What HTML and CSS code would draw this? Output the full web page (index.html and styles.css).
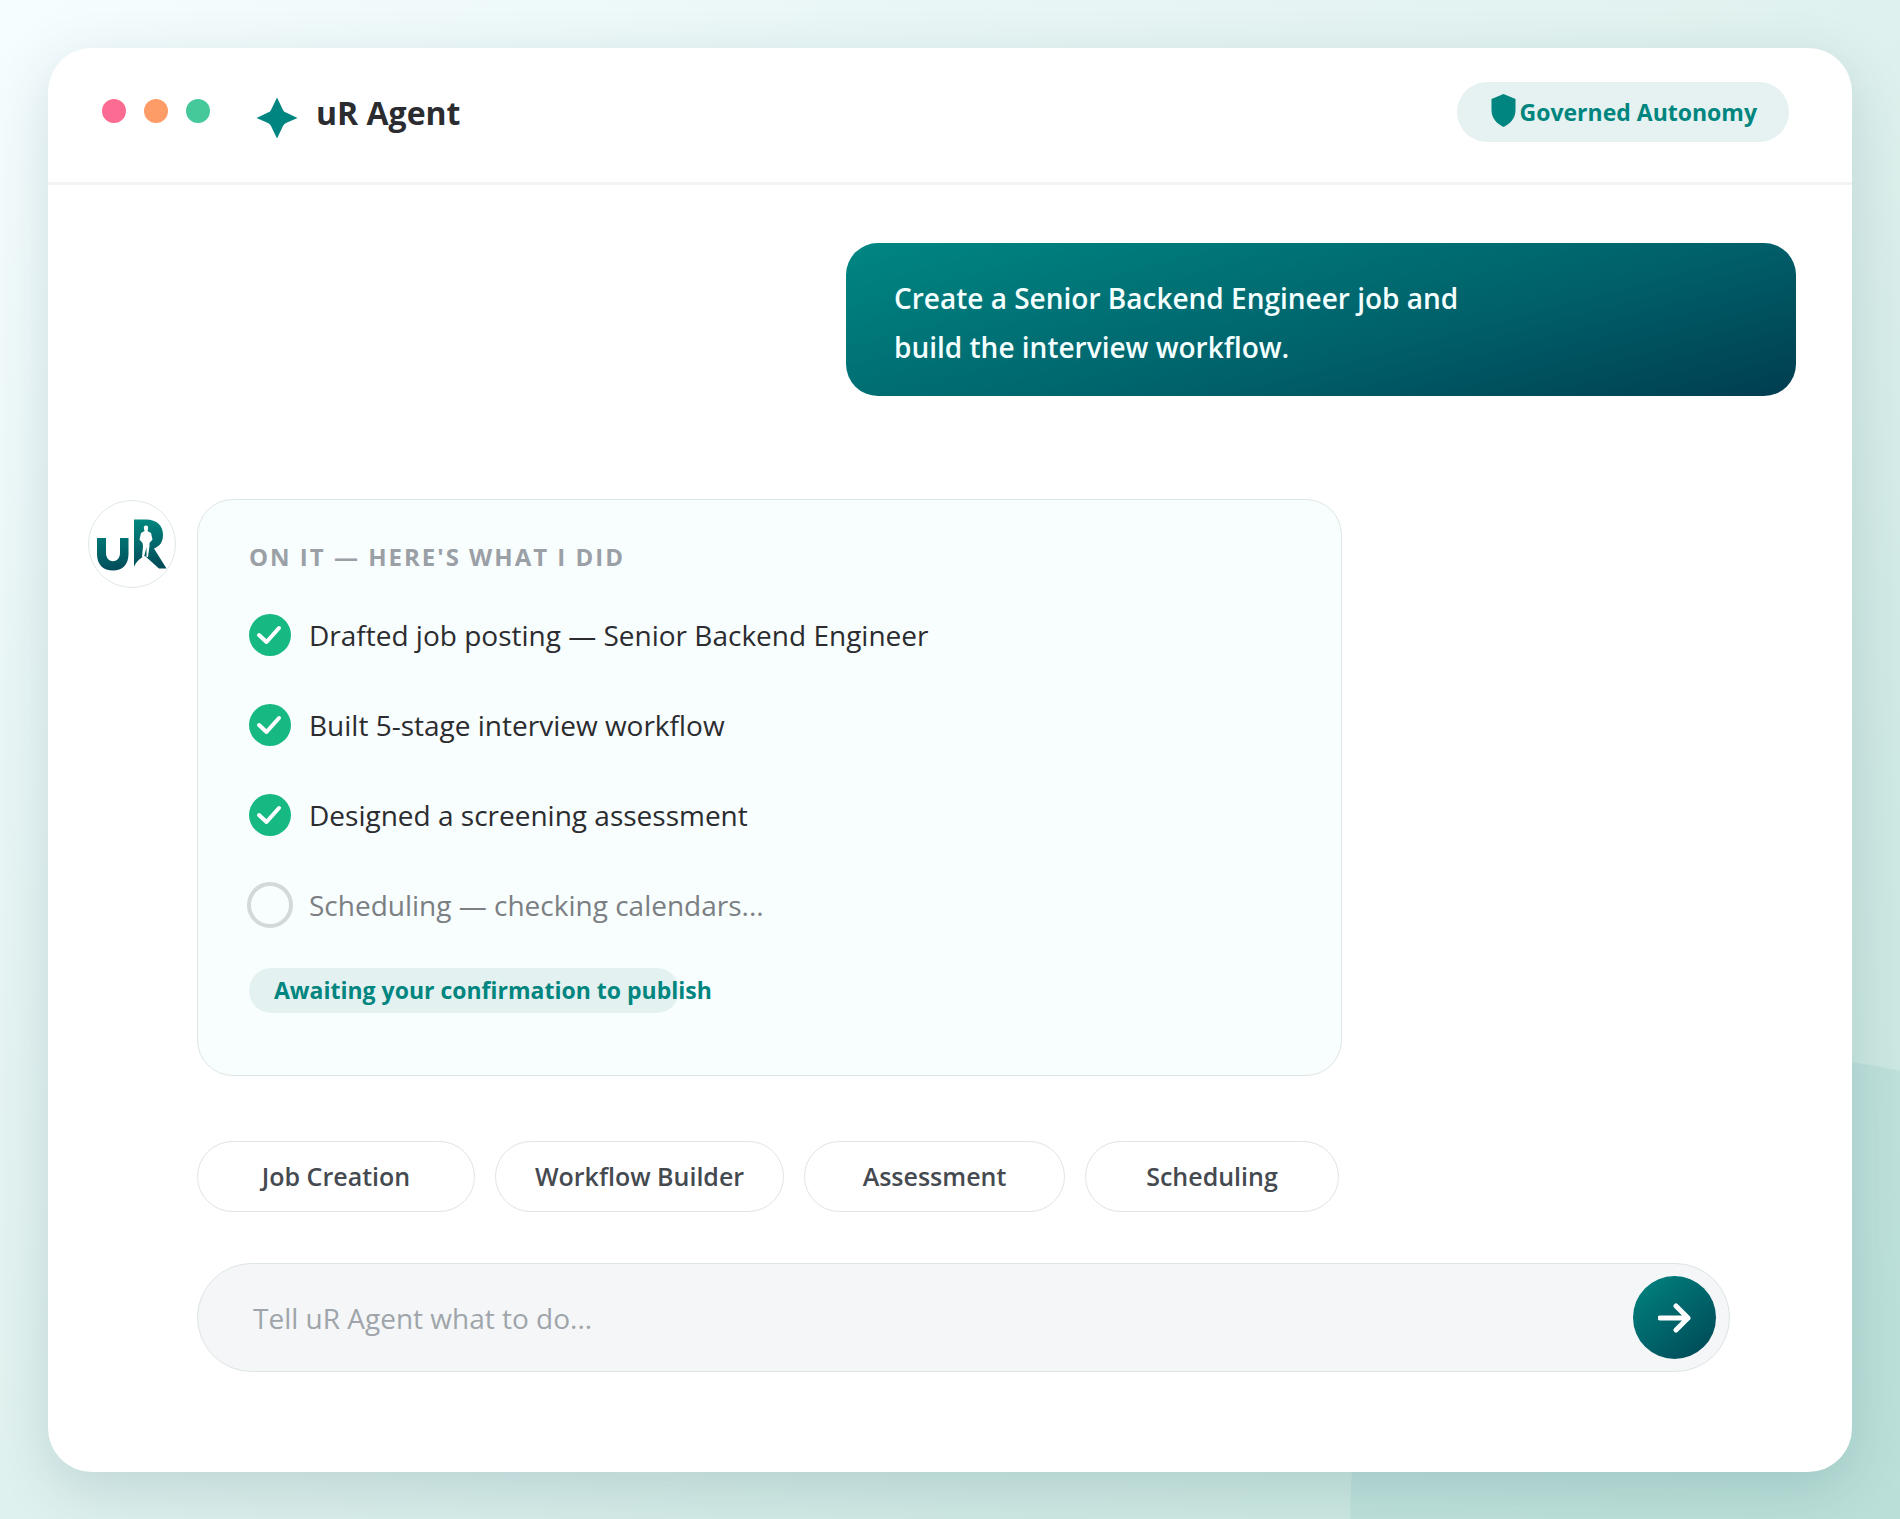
FILE: index.html
```html
<!DOCTYPE html>
<html lang="en">
<head>
<meta charset="utf-8">
<meta name="viewport" content="width=device-width, initial-scale=1">
<title>uR Agent</title>
<link rel="stylesheet" href="styles.css">
</head>
<body class="page">
<main class="window">
  <header class="titlebar">
    <div class="lights" aria-hidden="true">
      <span class="light light-close"></span>
      <span class="light light-min"></span>
      <span class="light light-max"></span>
    </div>
    <svg class="spark" viewBox="0 0 42 42" aria-hidden="true"><path d="M21 0.5 L27 13 Q28 15 30 15.500 L41.500 21 L30 26 Q28 27 27 29 L21 41.500 L15 29 Q14 27 12 26 L0.500 21 L12 15.500 Q14 15 15 13 Z"/></svg>
    <h1 class="title">uR Agent</h1>
    <div class="badge">
      <svg class="shield" viewBox="0 0 24 33" aria-hidden="true"><path d="M12 0 L24 5 V16 C24 25 18 30 12 33 C6 30 0 25 0 16 V5 Z"/></svg>
      <span>Governed Autonomy</span>
    </div>
  </header>

  <section class="chat">
    <p class="request">Create a Senior Backend Engineer job and<br>build the interview workflow.</p>

    <div class="reply">
      <div class="avatar">
        <svg viewBox="1 1 86 86" role="img" aria-label="uR">
          <defs>
            <linearGradient id="mark" gradientUnits="userSpaceOnUse" x1="40" y1="20" x2="46" y2="70">
              <stop offset="0" stop-color="#00897f"/><stop offset="1" stop-color="#004a58"/>
            </linearGradient>
          </defs>
          <path fill="url(#mark)" d="M9 38 H18 V53 C18 64 32 64 32 53 V38 H40.500 V54 C40.500 65 34 70.500 25 70.500 C15.500 70.500 9 65 9 54 Z"/>
          <path fill="url(#mark)" d="M46 19.500 H58 C69 19.500 75 26 75 34.500 C75 42 72 46 66 48.500 L78.500 68.500 H71 L57 56 C52 58 48 62 46 66.500 Z"/>
          <path fill="#fff" d="M58 25.500 C60 25.500 60.500 27 60 29 L59.500 31 L63 33 L64.500 39.500 L61.500 43 L61.500 46 L60 57 L58.500 57 L58.500 47 L56 57 L54 57 L55 46 L54.500 43 L51.500 39.500 L53 33 L56.500 31 L56 29 C55.500 27 56 25.500 58 25.500 Z"/>
        </svg>
      </div>
      <article class="card">
        <h2 class="card-title">ON IT — HERE'S WHAT I DID</h2>
        <ul class="steps">
          <li class="step"><svg class="mark" viewBox="0 0 42 42" aria-hidden="true"><circle cx="21" cy="21" r="21"/><path d="M10 21 L17.500 28 L30 14"/></svg>Drafted job posting — Senior Backend Engineer</li>
          <li class="step"><svg class="mark" viewBox="0 0 42 42" aria-hidden="true"><circle cx="21" cy="21" r="21"/><path d="M10 21 L17.500 28 L30 14"/></svg>Built 5-stage interview workflow</li>
          <li class="step"><svg class="mark" viewBox="0 0 42 42" aria-hidden="true"><circle cx="21" cy="21" r="21"/><path d="M10 21 L17.500 28 L30 14"/></svg>Designed a screening assessment</li>
          <li class="step step-pending"><span class="ring"></span>Scheduling — checking calendars...</li>
        </ul>
        <div class="status">Awaiting your confirmation to publish</div>
      </article>
    </div>

    <div class="chips">
      <button class="chip chip-job" type="button">Job Creation</button>
      <button class="chip chip-flow" type="button">Workflow Builder</button>
      <button class="chip chip-test" type="button">Assessment</button>
      <button class="chip chip-time" type="button">Scheduling</button>
    </div>

    <form class="composer">
      <input class="prompt" type="text" placeholder="Tell uR Agent what to do..." aria-label="Tell uR Agent what to do">
      <button class="send" type="button" aria-label="Send">
        <svg viewBox="0 0 34 34" aria-hidden="true"><path d="M2 17 H30 M18 5 L30 17 L18 29"/></svg>
      </button>
    </form>
  </section>
</main>
</body>
</html>
```
FILE: styles.css
```css
* {
  box-sizing: border-box;
}

/* The tinted disc sits behind the window's lower right corner */
.page {
  margin: 0;
  min-height: 100vh;
  padding: 48px;
  font-family: "Open Sans", "Noto Sans", sans-serif;
  color: #2b2c30;
  background:
    radial-gradient(circle at calc(100% - 100px) calc(100% - 11px), rgba(0, 134, 128, 0.07) 449px, transparent 450px),
    linear-gradient(141deg, #f6fdff 0%, #e9f6f6 25%, #dff1ee 50%, #cfe9e4 75%, #c8e6df 100%);
}

.window {
  min-height: 1423px;
  border-radius: 44px;
  background: #fff;
  box-shadow: 0 16px 56px rgba(0, 61, 80, 0.15);
}

.titlebar {
  display: flex;
  align-items: center;
  height: 137px;
  padding: 0 63px 6px 54px;
  border-bottom: 3px solid #f1f3f4;
}

.lights {
  display: flex;
  gap: 18px;
  margin-bottom: 2px;
}

.light {
  width: 24px;
  height: 24px;
  border-radius: 50%;
}

.light-close { background: #fc6b92; }
.light-min { background: #fd9c67; }
.light-max { background: #45c99b; }

.spark {
  width: 42px;
  height: 42px;
  margin: 12px 18px 0 46px;
  fill: #008580;
}

.title {
  margin: 0;
  font-size: 32px;
  font-weight: 700;
}

.badge {
  display: flex;
  align-items: center;
  gap: 4px;
  height: 60px;
  margin-left: auto;
  padding: 0 32px 0 34px;
  border-radius: 30px;
  background: #e5f2f1;
  color: #00857f;
  font-size: 23px;
  font-weight: 700;
}

.shield {
  width: 25px;
  height: 33px;
  margin-bottom: 4px;
  fill: #008580;
}

.chat {
  padding: 58px 56px 100px 40px;
}

.request {
  width: 950px;
  max-width: 100%;
  margin: 0 0 0 auto;
  padding: 31px 48px 24px;
  border-radius: 32px;
  background: linear-gradient(165deg, #008683 0%, #00606a 60%, #003d50 100%);
  color: #f4ffff;
  font-size: 28px;
  font-weight: 600;
  line-height: 49px;
}

.reply {
  display: flex;
  align-items: flex-start;
  gap: 21px;
  margin-top: 103px;
}

.avatar {
  flex: none;
  width: 88px;
  height: 88px;
  margin-top: 1px;
  border: 1px solid #dfe7e7;
  border-radius: 50%;
}

.avatar svg {
  display: block;
  width: 100%;
}

.card {
  width: 1145px;
  padding: 41px 51px 62px;
  border: 1px solid #dde6e6;
  border-radius: 36px;
  background: #f8fdfd;
}

.card-title {
  margin: 0;
  color: #9aa0a6;
  font-size: 24px;
  font-weight: 700;
  line-height: 32px;
  letter-spacing: 2px;
}

.steps {
  display: grid;
  gap: 42px;
  margin: 38px 0 0;
  padding: 0;
  list-style: none;
}

.step {
  display: flex;
  align-items: center;
  gap: 18px;
  height: 48px;
  font-size: 28px;
}

.step-pending {
  color: #7b7f83;
}

.mark {
  width: 42px;
  height: 42px;
}

.mark circle { fill: #17b983; }

.mark path {
  fill: none;
  stroke: #fff;
  stroke-width: 4;
  stroke-linecap: round;
  stroke-linejoin: round;
}

.ring {
  width: 46px;
  height: 46px;
  margin: 0 -2px;
  border: 4px solid #d2d9d9;
  border-radius: 50%;
}

.status {
  width: 430px;
  height: 45px;
  margin-top: 39px;
  padding-left: 25px;
  border-radius: 23px;
  background: #e4f1f1;
  color: #00857f;
  font-size: 23px;
  font-weight: 700;
  line-height: 45px;
  white-space: nowrap;
}

.chips {
  display: flex;
  gap: 20px;
  margin: 65px 0 0 109px;
}

.chip {
  height: 71px;
  padding: 0 0 2px;
  border: 1px solid #dfe5e5;
  border-radius: 36px;
  background: #fff;
  color: #454a50;
  font: 600 25px "Open Sans", "Noto Sans", sans-serif;
}

.chip-job { width: 278px; }
.chip-flow { width: 289px; }
.chip-test { width: 261px; }
.chip-time { width: 254px; }

.composer {
  display: flex;
  align-items: center;
  height: 109px;
  margin: 51px 66px 0 109px;
  padding: 0 13px 0 55px;
  border: 1px solid #dde5e5;
  border-radius: 55px;
  background: #f4f6f8;
}

.prompt {
  flex: 1;
  min-width: 0;
  height: 60px;
  padding: 0;
  border: 0;
  outline: 0;
  background: transparent;
  color: #2b2c30;
  font: 400 28px "Open Sans", "Noto Sans", sans-serif;
}

.prompt::placeholder {
  color: #9fa5aa;
  opacity: 1;
}

.send {
  display: grid;
  place-items: center;
  width: 83px;
  height: 83px;
  padding: 0;
  border: 0;
  border-radius: 50%;
  background: linear-gradient(140deg, #008481 0%, #004654 100%);
}

.send svg {
  width: 34px;
  height: 34px;
  fill: none;
  stroke: #fff;
  stroke-width: 5;
  stroke-linecap: round;
  stroke-linejoin: round;
}
```
